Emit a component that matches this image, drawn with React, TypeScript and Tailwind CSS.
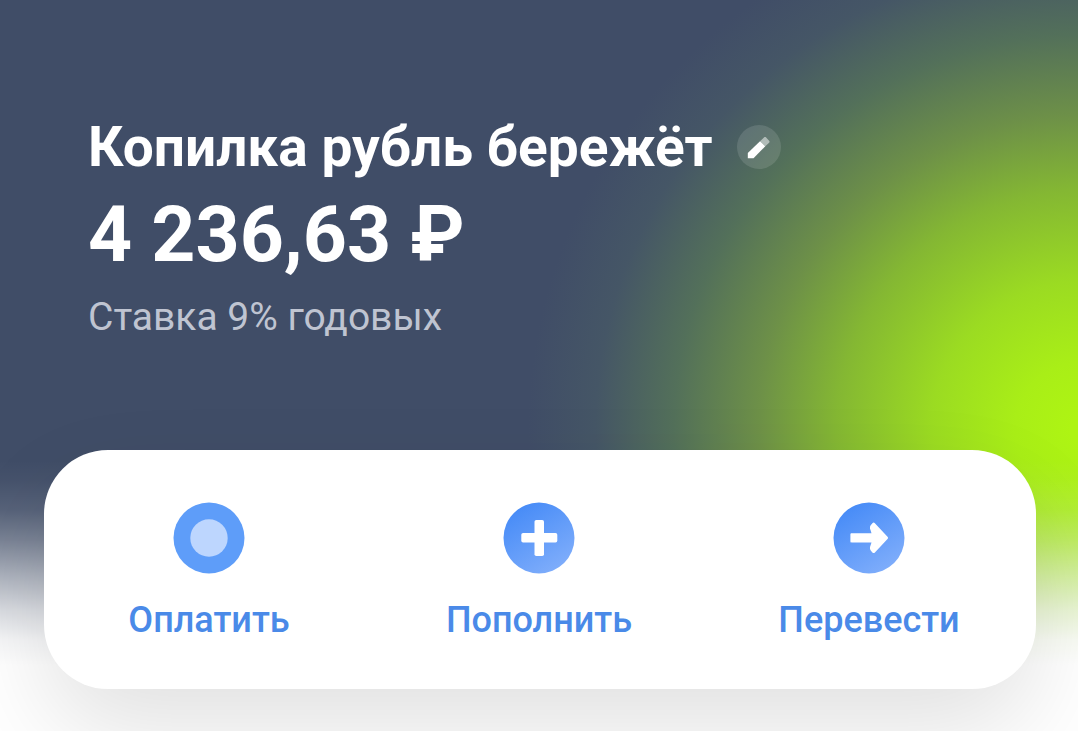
import type { ReactNode } from "react";

function PencilIcon() {
  return (
    <svg viewBox="0 0 44 44" className="size-11" aria-hidden="true">
      <path d="M10.800 33.200v-5.300L23 16.300l5.300 5L16.500 33.200z" fill="#fff" />
      <path d="M23 16.300l4.200-4c.5-.5 1.200-.5 1.700 0l3.200 3.500c.6.600.6 1.400 0 2l-3.800 3.500z" fill="#fff" fillOpacity=".5" />
    </svg>
  );
}

function PayIcon() {
  return (
    <svg viewBox="0 0 72 72" className="size-18" aria-hidden="true">
      <circle cx="36" cy="36" r="35.500" fill="#5e9df9" />
      <circle cx="36" cy="36" r="18.700" fill="#bdd6fe" />
    </svg>
  );
}

function GradientDisc({ id, children }: { id: string; children: ReactNode }) {
  return (
    <svg viewBox="0 0 72 72" className="size-18" aria-hidden="true">
      <defs>
        <linearGradient id={id} x1="0.2" y1="0.05" x2="0.8" y2="1">
          <stop offset="0" stopColor="#468bf7" />
          <stop offset="1" stopColor="#82affb" />
        </linearGradient>
      </defs>
      <circle cx="36" cy="36" r="35.500" fill={`url(#${id})`} />
      {children}
    </svg>
  );
}

function PlusIcon() {
  return (
    <GradientDisc id="disc-plus">
      <rect x="31.500" y="18" width="9.500" height="36" rx="1.800" fill="#fff" />
      <rect x="18.300" y="31" width="36" height="9.500" rx="1.800" fill="#fff" />
    </GradientDisc>
  );
}

function ArrowIcon() {
  return (
    <GradientDisc id="disc-arrow">
      <path
        d="M18.600 31.300h19.900l-1-3.200c-.9-2-.7-3.900.4-5.200l1.500-1.700c.8-.8 1.700-.8 2.500 0L54.500 34.700c.7.7.7 1.600 0 2.300L41.900 50.500c-.8.800-1.700.8-2.500 0l-1.500-1.700c-1.100-1.300-1.300-3.200-.4-5.200l1-3.200H18.600c-.8 0-1.200-.4-1.200-1.200v-6.700c0-.8.400-1.200 1.200-1.200z"
        fill="#fff"
      />
    </GradientDisc>
  );
}

const actions = [
  { label: "Оплатить", icon: <PayIcon /> },
  { label: "Пополнить", icon: <PlusIcon /> },
  { label: "Перевести", icon: <ArrowIcon /> },
];

export default function App() {
  return (
    <main className="min-h-screen overflow-hidden bg-white font-[Roboto,sans-serif]">
      <div className="min-h-screen bg-[linear-gradient(to_bottom,transparent_460px,rgba(255,255,255,0.03)_480px,rgba(255,255,255,0.12)_510px,rgba(255,255,255,0.3)_540px,rgba(255,255,255,0.56)_575px,rgba(255,255,255,0.8)_610px,rgba(255,255,255,0.95)_640px,white_665px),radial-gradient(560px_535px_at_calc(100%_+_10px)_430px,#aef413_3%,#a9ee17_13%,#9bdb22_28%,#84b733_45%,#6d9048_59%,#53705a_74%,#455666_88%,#404d67_100%)] pb-11">
        <header className="px-[88px] pt-[115px]">
          <div className="flex items-center gap-6">
            <h1 className="text-[55px] leading-16 font-bold text-white">Копилка рубль бережёт</h1>
            <button
              type="button"
              aria-label="Изменить название"
              className="size-11 shrink-0 rounded-full bg-white/12"
            >
              <PencilIcon />
            </button>
          </div>
          <p className="mt-2 text-[77px] leading-24 font-bold text-white">4 236,63 ₽</p>
          <p className="mt-2 text-[39px] leading-[52px] text-[#bfc4d1]">Ставка 9% годовых</p>
        </header>

        <nav
          aria-label="Действия"
          className="mx-[42px] mt-[107px] ml-11 grid grid-cols-3 rounded-[64px] bg-white pt-[52px] pr-0.5 pb-[47px] shadow-[0_44px_100px_-4px_rgba(0,0,0,0.12)]"
        >
          {actions.map((action) => (
            <button
              key={action.label}
              type="button"
              className="flex flex-col items-center gap-6 text-[36px] leading-11 font-medium text-[#4a8ae8]"
            >
              {action.icon}
              {action.label}
            </button>
          ))}
        </nav>
      </div>
    </main>
  );
}
